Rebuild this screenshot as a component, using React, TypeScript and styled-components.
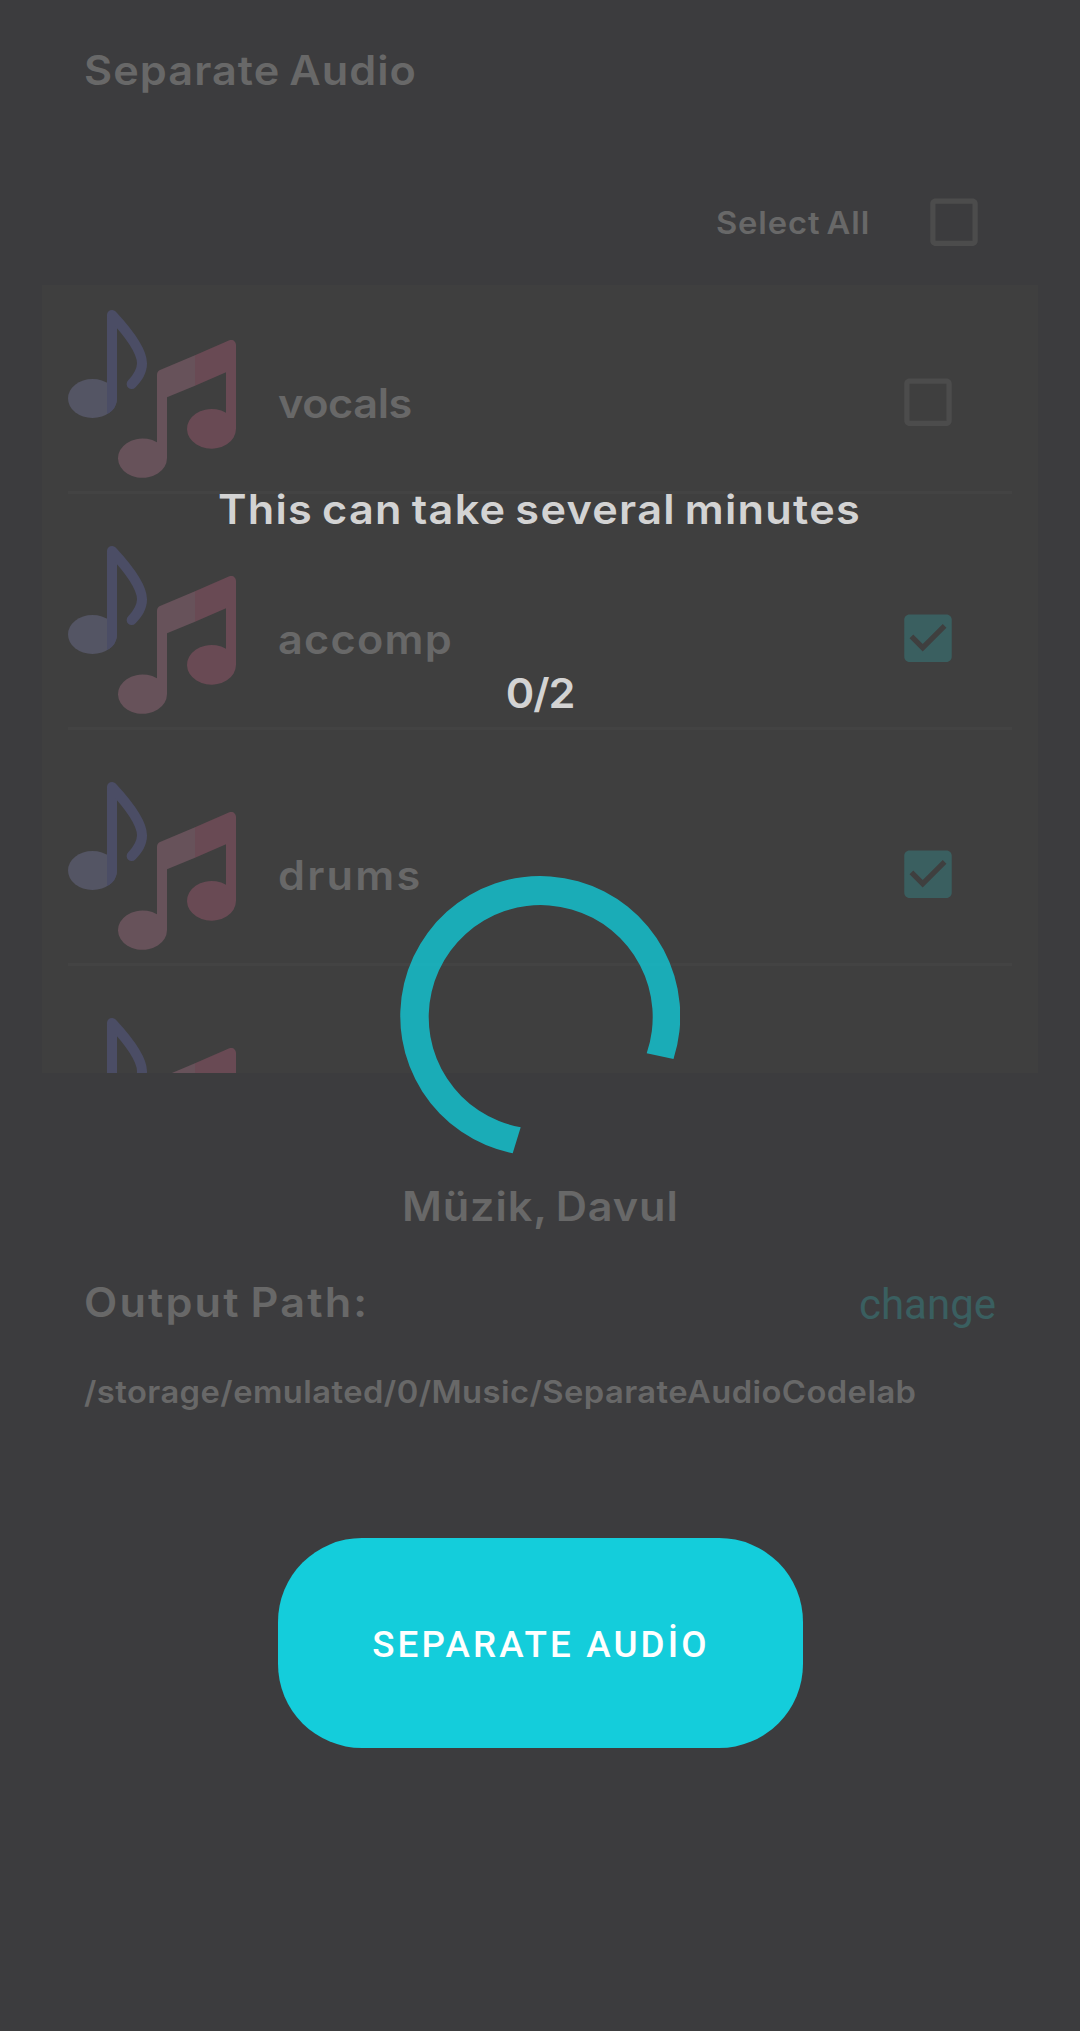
import React from "react";
import styled, { createGlobalStyle } from "styled-components";

const Global = createGlobalStyle`
  *, *::before, *::after { box-sizing: border-box; }
  body { margin: 0; background: #3c3c3e; }
`;

const Screen = styled.main`
  position: relative;
  display: flex;
  flex-direction: column;
  width: 1080px;
  height: 2031px;
  padding-top: 46px;
  overflow: hidden;
  background: #3c3c3e;
  color: #686868;
  font-family: Inter, "Open Sans", sans-serif;
  font-weight: 600;
`;

const Label = styled.span<{ $track?: number; $origin?: string }>`
  display: block;
  padding-top: 1px;
  white-space: nowrap;
  font-size: 40.4px;
  line-height: 48px;
  letter-spacing: ${(p) => p.$track ?? 0}px;
  word-spacing: -3px;
  transform: scaleX(1.07);
  transform-origin: ${(p) => p.$origin ?? "left"} center;
`;

const SmallLabel = styled(Label)`
  padding-top: 0;
  font-size: 30.6px;
  line-height: 38px;
`;

const SelectLabel = styled(SmallLabel)`
  padding-top: 2px;
`;

const StemName = styled(Label)`
  padding-top: 3px;
`;

const Header = styled.header`
  padding: 0 84px;
`;

const SelectAll = styled.div`
  display: flex;
  align-items: center;
  justify-content: flex-end;
  gap: 60px;
  height: 64px;
  margin-top: 95px;
  padding-right: 102px;
`;

const Card = styled.section`
  height: 788px;
  margin: 31px 42px 0;
  padding: 25px 26px 0;
  overflow: hidden;
  background: #3f3f3f;
`;

const Row = styled.div`
  display: flex;
  height: 184px;
  margin-bottom: 52px;
  padding-right: 60px;
  border-bottom: 3px solid #434343;
`;

const RowBody = styled.div`
  display: flex;
  flex: 1;
  align-items: center;
  justify-content: space-between;
  height: 184px;
  margin-left: 42px;
`;

const Selection = styled.div`
  display: flex;
  justify-content: center;
  margin-top: 109px;
`;

const OutputRow = styled.div`
  display: flex;
  justify-content: space-between;
  height: 48px;
  margin-top: 47px;
  padding: 0 84px;
`;

const Change = styled.a`
  padding-top: 3px;
  font: 400 42px/48px Roboto, sans-serif;
  color: #3a5f60;
`;

const Path = styled.div`
  margin-top: 47px;
  padding-left: 84px;
`;

const Action = styled.button`
  align-self: center;
  width: 525px;
  height: 210px;
  margin-top: 127px;
  padding: 3px 0 0 2px;
  border: 0;
  border-radius: 84px;
  background: #14cddb;
  color: #fff;
  font: 500 36.75px/48px Roboto, sans-serif;
  letter-spacing: 3.150px;
`;

const Overlay = styled.div`
  position: absolute;
  inset: 0;
  display: flex;
  flex-direction: column;
  align-items: center;
  padding-top: 485px;
  color: #d3d3d3;
  pointer-events: none;
`;

const Count = styled.div`
  margin: 135px 0 158px;
`;

const Svg = styled.svg`
  display: block;
  flex: none;
`;

const Notes = () => (
  <Svg width="168" height="168" viewBox="0 0 504 504">
    <ellipse cx="73.5" cy="265.5" rx="73.5" ry="58.5" fill="#545564" />
    <path d="M117 15V313Q147 298 147 265V15Z" fill="#4b4d65" />
    <path d="M132 15C185 72 222 125 222 160C222 185 210 202 191 222" fill="none" stroke="#4b4d65" strokeWidth="30" strokeLinecap="round" />
    <path d="M381 136L276 180Q267 184 267 195V397A73.5 59 0 1 0 297 445V262L381 227Z" fill="#67525a" />
    <path d="M381 136L484 91C494 87 504 94 504 105V356.500A73.500 59.500 0 1 1 474 308.500V187L381 227Z" fill="#694a54" />
  </Svg>
);

const Check = ({ on }: { on?: boolean }) => (
  <Svg width="48" height="48" viewBox="2.9 2.8 18.2 18.2">
    {on ? (
      <path fill="#3a5f60" d="M19 3H5c-1.110 0-2 .9-2 2v14c0 1.100.89 2 2 2h14c1.110 0 2-.9 2-2V5c0-1.100-.89-2-2-2zm-9 14l-5-5 1.410-1.410L10 14.170l7.590-7.590L19 8l-9 9z" />
    ) : (
      <path fill="#4c4c4c" d="M19 5v14H5V5h14m0-2H5c-1.100 0-2 .9-2 2v14c0 1.100.9 2 2 2h14c1.100 0 2-.9 2-2V5c0-1.100-.9-2-2-2z" />
    )}
  </Svg>
);

const Spinner = () => (
  <Svg width="280" height="280" viewBox="-140 -140 280 280">
    <path
      d="M-27.300 137.300A140 140 0 1 1 133.500 43L106.700 37.300A112 112 0 1 0 -19.300 111.300Z"
      fill="#11c8d6"
      fillOpacity="0.8"
    />
  </Svg>
);

const stems = [
  { name: "vocals", on: false, track: -0.38 },
  { name: "accomp", on: true, track: 1.18 },
  { name: "drums", on: true, track: 2.1 },
];

export default function App() {
  return (
    <>
      <Global />
      <Screen>
        <Header>
          <Label $track={1}>Separate Audio</Label>
        </Header>
        <SelectAll>
          <SelectLabel $track={0.85} $origin="right">Select All</SelectLabel>
          <Check />
        </SelectAll>
        <Card>
          {stems.map((s) => (
            <Row key={s.name}>
              <Notes />
              <RowBody>
                <StemName $track={s.track}>{s.name}</StemName>
                <Check on={s.on} />
              </RowBody>
            </Row>
          ))}
          <Row>
            <Notes />
          </Row>
        </Card>
        <Selection>
          <Label $track={0.86} $origin="center">Müzik, Davul</Label>
        </Selection>
        <OutputRow>
          <Label $track={2.03}>Output Path:</Label>
          <Change>change</Change>
        </OutputRow>
        <Path>
          <SmallLabel $track={0.4}>/storage/emulated/0/Music/SeparateAudioCodelab</SmallLabel>
        </Path>
        <Action>SEPARATE AUDİO</Action>
        <Overlay>
          <Label $track={1.2} $origin="center">This can take several minutes</Label>
          <Count>
            <Label $track={-1} $origin="center">0/2</Label>
          </Count>
          <Spinner />
        </Overlay>
      </Screen>
    </>
  );
}
